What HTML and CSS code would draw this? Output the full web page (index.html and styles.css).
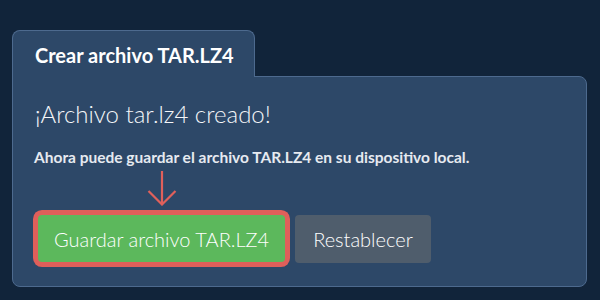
FILE: index.html
```html
<!DOCTYPE html>
<html>
<head>
  <title>Crear archivo TAR.LZ4</title>
  <meta charset="UTF-8" />
  <link rel="stylesheet" href="styles.css">
</head>
<body>
  <div class="card">
    <div class="tab">Crear archivo TAR.LZ4</div>
    <div class="panel">
      <h2>¡Archivo tar.lz4 creado!</h2>
      <p>Ahora puede guardar el archivo TAR.LZ4 en su dispositivo local.</p>

      <div class="actions">
        <div class="save-wrap">
          <svg class="arrow" width="30" height="35" viewBox="0 0 30 35">
            <path d="M15 0 V33.5 M1.5 20 L15 33.5 L28.5 20" fill="none" stroke="#e0605b" stroke-width="2.2"/>
          </svg>
          <button class="btn btn-save">Guardar archivo TAR.LZ4</button>
        </div>
        <button class="btn btn-reset">Restablecer</button>
      </div>
    </div>
  </div>
</body>
</html>
```

FILE: styles.css
```css
body {
  margin: 0;
  padding: 30px 13px 14px 12px;
  background: #11243a;
  font-family: Lato, "Open Sans", sans-serif;
  color: #f1f3f6;
}

.card {
  display: flex;
  flex-direction: column;
  align-items: flex-start;
}

.tab {
  box-sizing: border-box;
  width: 243px;
  height: 47px;
  padding: 12px 0 0 22px;
  background: #2d4868;
  border: 1px solid #4d6a8e;
  border-bottom: none;
  border-radius: 8px 8px 0 0;
  font-size: 20px;
  font-weight: bold;
  color: #ffffff;
  position: relative;
  z-index: 1;
  margin-bottom: -1px;
}

.panel {
  box-sizing: border-box;
  width: 575px;
  height: 211px;
  padding: 22px 22px;
  background: #2d4868;
  border: 1px solid #4d6a8e;
  border-radius: 0 8px 8px 8px;
}

.panel h2 {
  margin: 0;
  font-size: 24px;
  font-weight: 300;
  color: #f4f6f9;
}

.panel p {
  margin: 20px 0 0 -1px;
  font-size: 15.5px;
  font-weight: bold;
  color: #e6eaf0;
}

.actions {
  display: flex;
  align-items: flex-end;
  gap: 10px;
  margin-top: 5px;
}

.save-wrap {
  display: flex;
  flex-direction: column;
  align-items: center;
  gap: 9px;
  margin-left: 3px;
}

.btn {
  font-family: Lato, "Open Sans", sans-serif;
  font-size: 20px;
  font-weight: 300;
  color: #ffffff;
  border: none;
  border-radius: 4px;
  padding: 0 16px;
  height: 47px;
}

.btn-save {
  background: #5cb85c;
  box-shadow: 0 0 0 5px #df5f5a;
  margin-bottom: 1px;
}

.btn-reset {
  background: #4f5d6c;
  padding: 0 18px;
  height: 48px;
}
```
